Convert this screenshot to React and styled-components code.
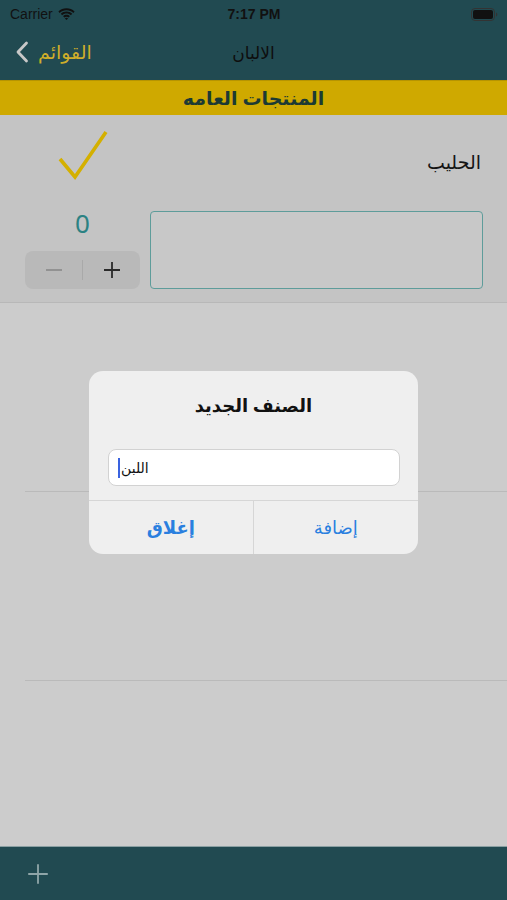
import React from 'react';
import styled, { createGlobalStyle } from 'styled-components';

const GlobalStyle = createGlobalStyle`
	html, body {
		margin: 0;
		padding: 0;
		background: #cccccc;
	}
	body {
		font-family: 'Noto Sans', 'DejaVu Sans', sans-serif;
	}
`;

const Screen = styled.div`
	position: relative;
	width: 507px;
	height: 900px;
	display: flex;
	flex-direction: column;
	background: #cccccc;
	overflow: hidden;
`;

const TopBars = styled.div`
	background: #214a51;
	height: 80px;
	display: flex;
	flex-direction: column;
`;

const StatusBar = styled.div`
	height: 28px;
	display: flex;
	align-items: center;
	justify-content: space-between;
	padding: 0 9px 0 10px;
	font-family: 'Liberation Sans', 'Noto Sans', sans-serif;
	font-size: 14px;
	color: #111;
`;

const Carrier = styled.div`
	display: flex;
	align-items: center;
	gap: 5px;
	width: 90px;
`;

const Clock = styled.div`
	font-weight: 700;
	font-size: 14px;
`;

const BatteryBox = styled.div`
	width: 90px;
	display: flex;
	justify-content: flex-end;
`;

const NavBar = styled.div`
	flex: 1;
	display: grid;
	grid-template-columns: 1fr auto 1fr;
	align-items: center;
	padding: 0 15px 4px 15px;
`;

const BackButton = styled.div`
	display: flex;
	align-items: center;
	gap: 9px;
	color: #cfae2a;
	font-size: 19px;
`;

const NavTitle = styled.div`
	font-size: 17px;
	color: #0e0e0e;
	font-weight: 500;
`;

const SectionHeader = styled.div`
	height: 34px;
	background: #cfa900;
	border-top: 1px solid #b69400;
	display: flex;
	align-items: center;
	justify-content: center;
	font-size: 19px;
	font-weight: 700;
	color: #1c3a33;
	direction: rtl;
`;

const List = styled.div`
	flex: 1;
	display: flex;
	flex-direction: column;
`;

const ItemRow = styled.div`
	height: 188px;
	background: #c4c4c4;
	border-bottom: 1px solid #b8b8b8;
	display: grid;
	grid-template-columns: 115px 1fr;
	grid-template-rows: 94px 1fr;
	column-gap: 10px;
	padding: 0 24px 0 25px;
	box-sizing: border-box;
`;

const CheckCell = styled.div`
	display: flex;
	justify-content: center;
	align-items: flex-start;
	padding-top: 14px;
`;

const ItemName = styled.div`
	direction: rtl;
	font-size: 19px;
	color: #141414;
	align-self: center;
	padding-right: 2px;
`;

const QtyCell = styled.div`
	display: flex;
	flex-direction: column;
	align-items: center;
	margin-top: -2px;
`;

const Qty = styled.div`
	font-size: 26px;
	color: #2b8283;
	line-height: 32px;
	height: 34px;
`;

const Stepper = styled.div`
	margin-top: 10px;
	width: 115px;
	height: 38px;
	background: #b9b9b9;
	border-radius: 8px;
	display: flex;
	align-items: center;
`;

const StepButton = styled.div`
	flex: 1;
	display: flex;
	justify-content: center;
	align-items: center;
	height: 100%;
`;

const StepDivider = styled.div`
	width: 1px;
	height: 20px;
	background: #a9a9a9;
`;

const NoteBox = styled.div`
	margin-top: 2px;
	height: 78px;
	border: 1.5px solid #5e9c9a;
	border-radius: 4px;
	box-sizing: border-box;
	background: #c8c8c8;
`;

const EmptyRow = styled.div`
	height: 189px;
	flex-shrink: 0;
	margin-left: 25px;
	border-bottom: 1px solid #bababa;
	box-sizing: border-box;
`;

const Spacer = styled.div`
	flex: 1;
`;

const Toolbar = styled.div`
	height: 54px;
	background: #214a51;
	border-top: 1px solid #8a9fa2;
	display: flex;
	align-items: center;
	padding-left: 27px;
	box-sizing: border-box;
`;

const Alert = styled.div`
	position: absolute;
	left: 89px;
	top: 371px;
	width: 329px;
	height: 183px;
	background: #efefef;
	border-radius: 14px;
	display: flex;
	flex-direction: column;
	overflow: hidden;
`;

const AlertTitle = styled.div`
	direction: rtl;
	text-align: center;
	font-size: 18px;
	font-weight: 700;
	color: #111;
	padding-top: 22px;
	height: 56px;
	box-sizing: border-box;
`;

const AlertField = styled.div`
	margin: 22px 18px 0 19px;
	height: 37px;
	background: #fff;
	border: 1px solid #d2d2d2;
	border-radius: 8px;
	display: flex;
	align-items: center;
	padding-left: 9px;
	font-size: 14px;
	color: #111;
	box-sizing: border-box;
`;

const Caret = styled.span`
	display: inline-block;
	width: 2px;
	height: 20px;
	background: #3a63e0;
	margin-right: 1px;
`;

const AlertActions = styled.div`
	margin-top: 14px;
	flex: 1;
	border-top: 1px solid #d6d6d6;
	display: grid;
	grid-template-columns: 1fr 1fr;
`;

const AlertButton = styled.div`
	display: flex;
	align-items: center;
	justify-content: center;
	font-size: 18px;
	color: #2a7fdf;
	font-weight: ${(p) => (p.bold ? 700 : 500)};
	border-right: ${(p) => (p.divided ? '1px solid #d6d6d6' : 'none')};
	direction: rtl;
	padding-bottom: 2px;
`;

const Wifi = () => (
	<svg width="17" height="12" viewBox="0 0 17 12">
		<path d="M8.5 2.2c2.6 0 5 1 6.8 2.7l1.3-1.4C14.4 1.5 11.6.3 8.5.3S2.6 1.5.4 3.5l1.3 1.4C3.5 3.2 5.9 2.2 8.5 2.2z" fill="#111" />
		<path d="M8.5 5.5c1.7 0 3.2.6 4.4 1.7l1.3-1.4C12.7 4.4 10.7 3.6 8.5 3.6S4.3 4.4 2.8 5.8l1.3 1.4C5.3 6.1 6.8 5.5 8.5 5.5z" fill="#111" />
		<path d="M8.5 8.8c.8 0 1.5.3 2 .8l1.4-1.4c-.9-.9-2.1-1.4-3.4-1.4s-2.5.5-3.4 1.4l1.4 1.4c.5-.5 1.2-.8 2-.8zM8.5 12l1.6-1.6c-.4-.4-1-.6-1.6-.6s-1.2.2-1.6.6z" fill="#111" />
	</svg>
);

const Battery = () => (
	<svg width="27" height="13" viewBox="0 0 27 13">
		<rect x="0.5" y="0.5" width="23" height="12" rx="3.5" fill="none" stroke="#333" />
		<rect x="2" y="2" width="20" height="9" rx="2" fill="#111" />
		<path d="M25 4.5v4c.8-.3 1.3-1.1 1.3-2s-.5-1.7-1.3-2z" fill="#333" />
	</svg>
);

const Chevron = () => (
	<svg width="14" height="22" viewBox="0 0 14 22">
		<path d="M11.5 2L3 11l8.5 9" fill="none" stroke="#c8c8c8" strokeWidth="2.8" strokeLinecap="round" strokeLinejoin="round" />
	</svg>
);

const Check = () => (
	<svg width="52" height="54" viewBox="0 0 52 54">
		<path d="M3 30l15 18L49 3" fill="none" stroke="#d4b000" strokeWidth="3.6" strokeLinejoin="miter" />
	</svg>
);

const Minus = () => (
	<svg width="18" height="18" viewBox="0 0 18 18">
		<path d="M1 9h16" stroke="#8e8e8e" strokeWidth="1.8" />
	</svg>
);

const Plus = ({ color = '#2a2a2a', size = 18, weight = 1.8 }) => (
	<svg width={size} height={size} viewBox="0 0 18 18">
		<path d="M1 9h16M9 1v16" stroke={color} strokeWidth={weight} />
	</svg>
);

export default function App() {
	return (
		<>
			<GlobalStyle />
			<Screen>
				<TopBars>
					<StatusBar>
						<Carrier>
							Carrier <Wifi />
						</Carrier>
						<Clock>7:17 PM</Clock>
						<BatteryBox>
							<Battery />
						</BatteryBox>
					</StatusBar>
					<NavBar>
						<BackButton>
							<Chevron />
							<span>القوائم</span>
						</BackButton>
						<NavTitle>الالبان</NavTitle>
						<div />
					</NavBar>
				</TopBars>
				<SectionHeader>المنتجات العامه</SectionHeader>
				<List>
					<ItemRow>
						<CheckCell>
							<Check />
						</CheckCell>
						<ItemName>الحليب</ItemName>
						<QtyCell>
							<Qty>0</Qty>
							<Stepper>
								<StepButton>
									<Minus />
								</StepButton>
								<StepDivider />
								<StepButton>
									<Plus />
								</StepButton>
							</Stepper>
						</QtyCell>
						<NoteBox />
					</ItemRow>
					<EmptyRow />
					<EmptyRow />
					<Spacer />
				</List>
				<Toolbar>
					<Plus color="#8fa5a8" size={22} weight={1.5} />
				</Toolbar>
				<Alert>
					<AlertTitle>الصنف الجديد</AlertTitle>
					<AlertField>
						<Caret />
						<span>اللبن</span>
					</AlertField>
					<AlertActions>
						<AlertButton divided bold>إغلاق</AlertButton>
						<AlertButton>إضافة</AlertButton>
					</AlertActions>
				</Alert>
			</Screen>
		</>
	);
}
